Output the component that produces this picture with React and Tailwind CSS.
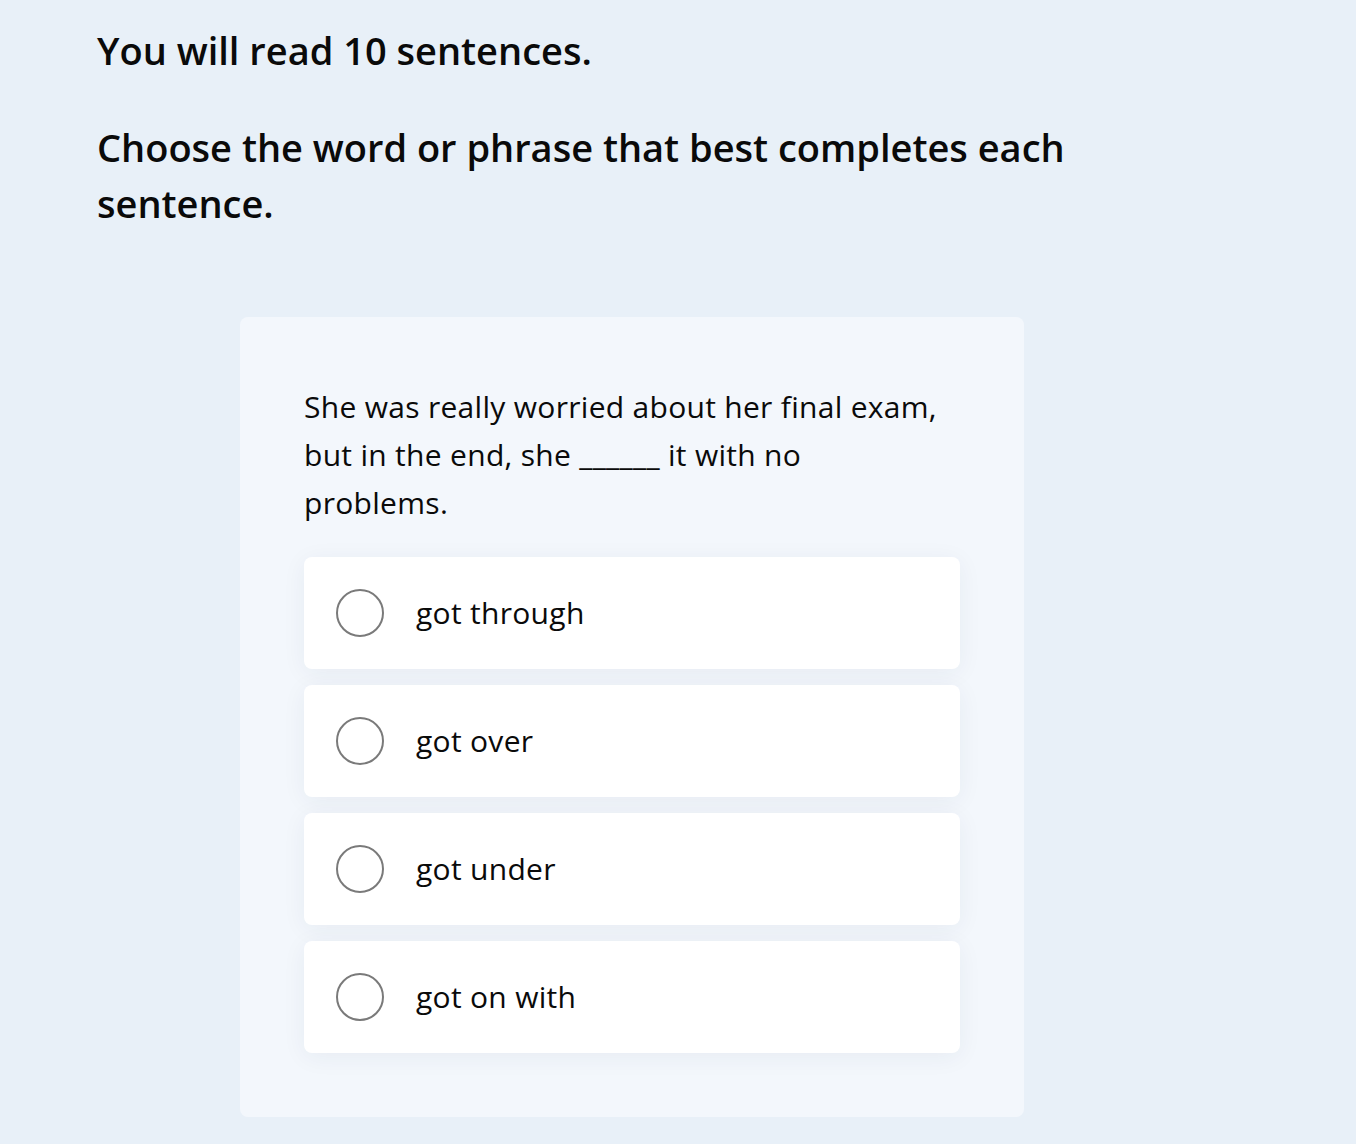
import React from "react"

const options = ["got through", "got over", "got under", "got on with"]

function Option({ label }) {
  return (
    <label className="flex h-[112px] cursor-pointer items-center rounded-lg bg-white pl-8 shadow-[0_4px_24px_rgba(30,50,90,0.06)]">
      <span className="h-12 w-12 shrink-0 rounded-full border-2 border-[#7a7a7a] bg-white" />
      <span className="ml-8 text-[30px] leading-none tracking-[0.3px] text-[#0a0a0a]">{label}</span>
    </label>
  )
}

export default function App() {
  return (
    <div
      className="min-h-screen bg-[#e8f0f8] pl-[97px] pt-[22px]"
      style={{ fontFamily: "'Open Sans', 'Noto Sans', sans-serif" }}
    >
      <h1 className="text-[38px] font-semibold leading-[56px] text-[#0a0a0a]">You will read 10 sentences.</h1>
      <h2 className="mt-[41px] w-[1000px] text-[38px] font-semibold leading-[56px] text-[#0a0a0a]">
        Choose the word or phrase that best completes each sentence.
      </h2>

      <div className="ml-[143px] mt-[86px] w-[784px] rounded-lg bg-[#f3f7fc] px-16 pb-16 pt-[66px]">
        <p className="text-[30px] leading-[48px] tracking-[0.3px] text-[#0a0a0a]">
          She was really worried about her final exam,
          <br />
          but in the end, she ______ it with no
          <br />
          problems.
        </p>
        <div className="mt-[30px] flex flex-col gap-4">
          {options.map((o) => (
            <Option key={o} label={o} />
          ))}
        </div>
      </div>
    </div>
  )
}
